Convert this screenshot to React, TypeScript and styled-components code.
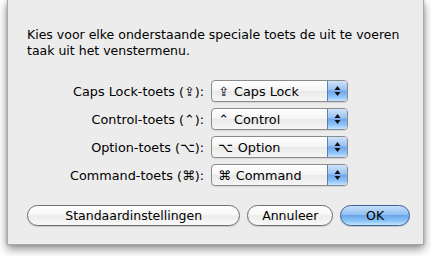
import React from 'react';
import styled, { createGlobalStyle } from 'styled-components';

const GlobalStyle = createGlobalStyle`
  html, body {
    margin: 0;
    padding: 0;
    background: #ffffff;
  }
  body {
    font-family: "DejaVu Sans", "Liberation Sans", sans-serif;
    -webkit-font-smoothing: antialiased;
  }
`;

type KeyRow = {
  label: string;
  glyph: string;
  value: string;
};

const ROWS: KeyRow[] = [
  { label: 'Caps Lock-toets', glyph: '⇪', value: 'Caps Lock' },
  { label: 'Control-toets', glyph: '⌃', value: 'Control' },
  { label: 'Option-toets', glyph: '⌥', value: 'Option' },
  { label: 'Command-toets', glyph: '⌘', value: 'Command' },
];

// --- Styled Components ---

const Page = styled.div`
  width: 431px;
  height: 256px;
  padding: 0 7px;
  box-sizing: border-box;
  overflow: hidden;
`;

const Sheet = styled.div`
  height: 245px;
  box-sizing: border-box;
  background: #ececec;
  border: 1px solid #a9a9a9;
  border-top: none;
  box-shadow: 0 4px 9px rgba(0, 0, 0, 0.45), 0 0 3px rgba(0, 0, 0, 0.2);
  padding: 27px 13px 0 19px;
  display: flex;
  flex-direction: column;
`;

const Intro = styled.p`
  margin: 0;
  font-size: 12.5px;
  line-height: 16px;
  color: #000;
  width: 380px;
`;

const Form = styled.div`
  margin-top: 21px;
  display: grid;
  grid-template-columns: 177px 137px;
  column-gap: 7px;
  row-gap: 6px;
  align-items: center;
`;

const Label = styled.label`
  font-size: 12.8px;
  text-align: right;
  white-space: nowrap;
  color: #000;
`;

const Popup = styled.div`
  height: 22px;
  box-sizing: border-box;
  border: 1px solid #8c8c8c;
  border-radius: 4px;
  background: linear-gradient(#ffffff 0%, #f4f4f4 50%, #e9e9e9 51%, #f6f6f6 100%);
  display: flex;
  align-items: stretch;
  overflow: hidden;
  box-shadow: 0 1px 1px rgba(0, 0, 0, 0.1);
`;

const PopupText = styled.span`
  flex: 1;
  display: flex;
  align-items: center;
  padding-left: 6px;
  font-size: 12.8px;
  color: #000;
  white-space: nowrap;
`;

const Glyph = styled.span`
  display: inline-block;
  min-width: 11px;
  text-align: center;
  margin-right: 5px;
`;

const Stepper = styled.div`
  width: 19px;
  border-left: 1px solid #5a7fb5;
  background: linear-gradient(#cfe3fb 0%, #98c1f1 45%, #6ea6ea 50%, #8fc4f7 80%, #c6e6ff 100%);
  display: flex;
  align-items: center;
  justify-content: center;
`;

const ButtonRow = styled.div`
  margin-top: 19px;
  display: flex;
  gap: 7px;
`;

const Button = styled.button<{ $width: number; $primary?: boolean }>`
  width: ${p => p.$width}px;
  height: 21px;
  box-sizing: border-box;
  border-radius: 11px;
  border: 1px solid ${p => (p.$primary ? '#3b5f96' : '#6e6e6e')};
  background: ${p =>
    p.$primary
      ? 'linear-gradient(#c9e0fb 0%, #91bff0 45%, #6aa5e9 50%, #8cc6f7 80%, #c6e8ff 100%)'
      : 'linear-gradient(#ffffff 0%, #f7f7f7 45%, #ececec 52%, #f9f9f9 100%)'};
  font-family: "DejaVu Sans", "Liberation Sans", sans-serif;
  font-size: 12.5px;
  color: #000;
  padding: 0;
  box-shadow: 0 1px 1px rgba(0, 0, 0, 0.15);
`;

function StepperArrows() {
  return (
    <svg width="7" height="12" viewBox="0 0 7 12">
      <path d="M3.5 1 L6.5 5 L0.5 5 Z" fill="#111" />
      <path d="M3.5 11 L6.5 7 L0.5 7 Z" fill="#111" />
    </svg>
  );
}

// --- Component ---
export default function App() {
  return (
    <>
      <GlobalStyle />
      <Page>
        <Sheet>
          <Intro>
            Kies voor elke onderstaande speciale toets de uit te voeren taak uit het venstermenu.
          </Intro>
          <Form>
            {ROWS.map(row => (
              <React.Fragment key={row.label}>
                <Label>
                  {row.label} ({row.glyph}):
                </Label>
                <Popup>
                  <PopupText>
                    <Glyph>{row.glyph}</Glyph>
                    {row.value}
                  </PopupText>
                  <Stepper>
                    <StepperArrows />
                  </Stepper>
                </Popup>
              </React.Fragment>
            ))}
          </Form>
          <ButtonRow>
            <Button $width={214}>Standaardinstellingen</Button>
            <Button $width={86}>Annuleer</Button>
            <Button $width={70} $primary>OK</Button>
          </ButtonRow>
        </Sheet>
      </Page>
    </>
  );
}
